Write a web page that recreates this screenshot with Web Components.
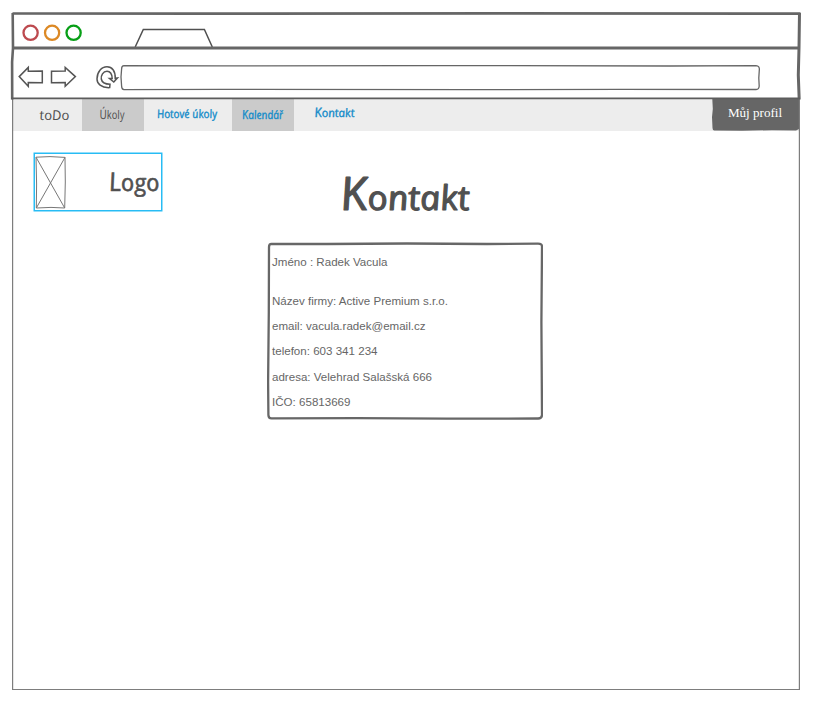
<!DOCTYPE html>
<html lang="cs"><head><meta charset="utf-8"><title>Kontakt</title>
<style>body{margin:0;background:#fff;font-family:"Liberation Sans",sans-serif;color:#505050}</style></head><body>
<browser-window>
<nav-bar slot="page">
<nav-item style="width:69px"><ink-text size="13.5" len="30" x="27" base="21" label="toDo"></ink-text></nav-item>
<nav-item shaded style="width:62px"><ink-text size="12" cap="13" len="25" x="18" base="20" label="Úkoly"></ink-text></nav-item>
<nav-item link style="width:88px"><ink-text size="11.5" len="60" x="13.5" base="19" pen=".35" label="Hotové úkoly"></ink-text></nav-item>
<nav-item shaded link style="width:62px"><ink-text size="11.5" cap="12.5" len="41" x="10.5" base="19.5" pen=".35" label="Kalendář"></ink-text></nav-item>
<nav-item link style="width:82px"><ink-text size="11.5" cap="13" len="40" x="21" base="18" pen=".35" label="Kontakt"></ink-text></nav-item>
<profile-button>Můj profil</profile-button>
</nav-bar>
<contact-page slot="page"></contact-page>
</browser-window>
<script>
function define(name, html, setup){
  const t=document.createElement('template'); t.innerHTML=html;
  customElements.define(name,class extends HTMLElement{
    connectedCallback(){
      if(this.shadowRoot)return;
      this.attachShadow({mode:'open'}).append(t.content.cloneNode(true));
      if(setup)setup(this,this.shadowRoot);
    }
  });
}
/* A line of text fitted to a given width; pen style straightens an italic face. */
define('ink-text',`<style>:host{display:block}svg{display:block;width:100%;height:100%;overflow:visible}text{fill:currentColor;stroke:currentColor;stroke-width:0;stroke-linejoin:round;font-family:"Open Sans","Noto Sans",sans-serif;font-style:italic}text.plain{stroke:none;font-family:"Liberation Sans",sans-serif;font-style:normal}</style><svg><text></text></svg>`,(h,r)=>{
  const t=r.querySelector('text'),a=n=>h.getAttribute(n);
  if(h.hasAttribute('plain'))t.classList.add('plain');
  if(a('pen'))t.style.strokeWidth=a('pen');
  const label=a('label'),cap=a('cap');
  if(cap){
    const s=document.createElementNS('http://www.w3.org/2000/svg','tspan');
    s.textContent=label[0];s.setAttribute('font-size',cap);t.append(s,label.slice(1));
  }else t.textContent=label;
  t.setAttribute('font-size',a('size'));
  t.setAttribute('textLength',a('len'));t.setAttribute('lengthAdjust','spacingAndGlyphs');
  t.setAttribute('transform',`translate(${a('x')||0} ${a('base')})`+(h.hasAttribute('plain')?'':' skewX(9)'));
});
define('title-bar',`<style>:host{display:block;height:35px}svg{display:block}</style>
<svg width="788" height="35" fill="none"><g stroke-width="2.3"><circle cx="18.6" cy="19.8" r="7.1" stroke="#bd4a4f"/><circle cx="40.1" cy="19.8" r="7.1" stroke="#dc8925"/><circle cx="61.6" cy="19.8" r="7.1" stroke="#079f16"/></g><path d="M123.2 34L131.3 16.5H192.4L200.3 34" stroke="#505050" stroke-width="1.5"/></svg>`);
define('tool-bar',`<style>:host{display:flex;height:51px;box-sizing:border-box;padding:17px 0 0 6px}svg{display:block;flex:none}</style>
<svg width="102" height="27" fill="none" stroke="#555" stroke-width="1.5"><path d="M1.2 11.6L10.3 2.4V6.2L24.3 6V17.7L10.3 17.4V21.3Z"/><path d="M33.5 6.2L47.2 6V2.4L57.4 11.6L47.2 21.3V17.4L33.5 17.7Z"/>
<path d="M91.7 22.6C83 23 79 18.5 79 14C79 7 83.5 1.8 89 1.8C94 1.8 97.5 6 97.2 13.3L99.4 13L95.8 17L91.5 13.5L94.2 13.5C94 9 92.5 6.2 89 6.2C85 6.2 82.8 10.5 83.3 14C84 18 88 19.2 92 19.3Z" stroke-width="1.5"/></svg>
<svg width="642" height="27" fill="none" stroke="#666" stroke-width="1.3"><path d="M4 .7L100 .9L320 .6L550 1L636 .7Q639.8 1 639.3 5L638.8 13L639.2 21Q639 24.6 636 24.5L500 24.4L350 24.7L100 24.4L4 24.7Q1.7 24.6 1.6 21L1 12L1.6 4Q1.6 .8 4 .7Z"/></svg>`);
define('browser-window',`<style>:host{display:block;position:relative;width:822px;height:706px;box-sizing:border-box;padding:13px 0 0 12px}.frame{position:absolute;left:0;top:0;pointer-events:none}</style>
<title-bar></title-bar><tool-bar></tool-bar><slot name="page"></slot>
<svg class="frame" width="822" height="706" fill="none"><path d="M12.6 98V689.5H799.4V98" stroke="#7d7d7d" stroke-width="1.2"/><g stroke="#666"><path d="M12.5 13.5L200 13.7L500 13.4L800.5 13.6" stroke-width="2.7"/><path d="M12 48H799" stroke-width="3"/><path d="M12.7 13L13 48L12.1 62L12.2 99.5" stroke-width="2.6"/><path d="M799.5 13L799 48L798.3 75L799.2 99.5" stroke-width="3"/><path d="M11 98.4H800" stroke-width="1.9" stroke="#5c5c5c"/></g></svg>`);
define('nav-bar',`<style>:host{display:flex;width:787px;height:32px;box-sizing:border-box;padding-left:1px;background:#ededed}::slotted(nav-item){flex:none}</style><slot></slot>`);
define('nav-item',`<style>:host{display:block;height:32px}:host([shaded]){background:#cbcbcb}:host([link]){color:#148bc9}</style><slot></slot>`);
define('profile-button',`<style>:host{display:block;margin-left:auto;width:87px;height:32px;position:relative;color:#fff}svg{position:absolute;left:0;top:0}span{position:relative;display:block;text-align:center;font:13.1px/30px "Liberation Serif",serif;margin-top:-1px;padding-right:1px}</style><svg width="87" height="32"><path d="M.3 0H87V30L84 31.6L60 31.2L30 31.8L2 31.5Q.6 31 .5 29L0 18L.8 10Z" fill="#666"/></svg><span><slot></slot></span>`);
define('image-mark',`<style>:host{display:block;width:126px;height:56px;border:1px solid #28bcf4;box-shadow:0 0 0 .5px #28bcf4}.row{display:flex;width:126px;height:56px}svg{flex:none}ink-text{width:50px}</style><div class="row"><svg width="75" height="56" fill="none" stroke="#777" stroke-width="1"><path d="M1 3.2L15 2.6L30 3.4L30.3 28L29.7 54L16 53.4L1.3 54L1.6 30L1 3.2L29.7 54M30 3.4L1.3 54"/></svg><ink-text size="24" cap="26" len="50.5" base="37" pen=".6" label="Logo"></ink-text></div>`);
define('contact-card',`<style>:host{display:grid;position:relative;width:276px;height:178px;grid-template-rows:38.5px repeat(5,25.4px);box-sizing:border-box;padding:10px 0 0 4.5px;color:#666}.outline{position:absolute;left:0;top:0}</style>
<svg class="outline" width="276" height="178" fill="none" stroke="#676767" stroke-width="2.3"><path d="M4.5 1.8L60 2L140 1.5L220 2L271 1.6Q275.2 1.6 275 5L274.4 80L275 173Q274.8 176.6 271 176.5L180 176.6L90 176.2L4.5 176.4Q1.5 176.4 1.4 173L1.1 140L1.8 70L2 5Q2 1.8 4.5 1.8Z"/></svg>
<ink-text plain size="11.4" len="115.5" base="14" label="Jméno : Radek Vacula"></ink-text>
<ink-text plain size="11.4" len="176" base="14" label="Název firmy: Active Premium s.r.o."></ink-text>
<ink-text plain size="11.4" len="153.5" base="14" label="email: vacula.radek@email.cz"></ink-text>
<ink-text plain size="11.4" len="105.5" base="14" label="telefon: 603 341 234"></ink-text>
<ink-text plain size="11.4" len="160" base="14" label="adresa: Velehrad Salašská 666"></ink-text>
<ink-text plain size="11.4" len="78.5" base="14" label="IČO: 65813669"></ink-text>`);
define('contact-page',`<style>:host{display:grid;grid-template-columns:233px 276px;width:787px;box-sizing:border-box;padding:22px 0 0 22px;align-items:start}.main{display:grid;gap:21px}.title{height:68px;padding-left:75px}</style>
<image-mark></image-mark><div class="main"><ink-text class="title" size="34" cap="46" len="129" base="57" pen="1.1" label="Kontakt"></ink-text><contact-card></contact-card></div>`);
</script></body></html>
